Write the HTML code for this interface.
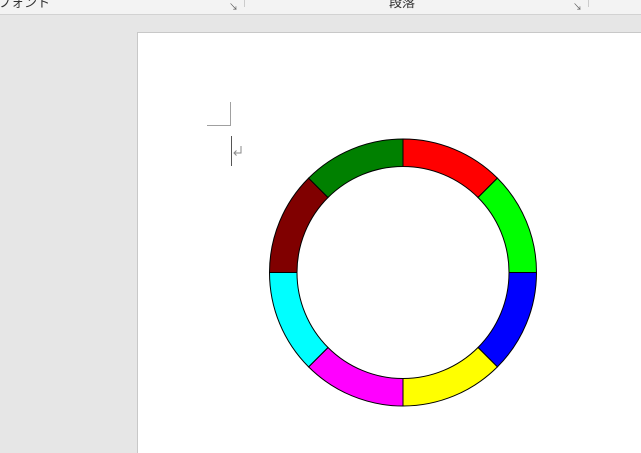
<!DOCTYPE html><html><head><meta charset="utf-8"><style>
body{margin:0;width:641px;height:442px;overflow:hidden;background:#e6e6e6;position:relative;font-family:"Liberation Sans","Noto Sans CJK JP",sans-serif}
.bar{position:absolute;left:0;top:0;width:641px;height:14px;background:#f3f3f3;border-bottom:1px solid #d2d2d2}
.t{position:absolute;top:-5px;font-size:13px;color:#333;line-height:16px}
.page{position:absolute;left:137px;top:32px;width:510px;height:420px;background:#fff;border-left:1px solid #c8c8c8;border-top:1px solid #c8c8c8}
</style></head><body>
<div class="bar">
<div class="t" style="left:-2px">フォント</div>
<div class="t" style="left:389px">段落</div>
<div style="position:absolute;left:229px;top:0;font-size:9px;color:#555">↘</div>
<div style="position:absolute;left:244px;top:0;width:1px;height:7px;background:#ccc"></div>
<div style="position:absolute;left:573px;top:0;font-size:9px;color:#555">↘</div>
<div style="position:absolute;left:588px;top:0;width:1px;height:7px;background:#ccc"></div>
</div>
<div class="page"></div>
<svg style="position:absolute;left:0;top:0" width="641" height="442">
<path d="M230.5 102V125.5H207" stroke="#a0a0a0" fill="none"/>
<path d="M231.5 136V166" stroke="#555" fill="none"/>
<path d="M241 146V153H234M236.5 150.5L234 153L236.5 155.5" stroke="#888" fill="none"/>
<g stroke="#000" stroke-width="1">
<path d="M403 139A133.5 133.5 0 0 1 497.4 178.1L478 197.5A106 106 0 0 0 403 166.5Z" fill="#f00"/>
<path d="M497.4 178.1A133.5 133.5 0 0 1 536.5 272.5L509 272.5A106 106 0 0 0 478 197.5Z" fill="#0f0"/>
<path d="M536.5 272.5A133.5 133.5 0 0 1 497.4 366.9L478 347.5A106 106 0 0 0 509 272.5Z" fill="#00f"/>
<path d="M497.4 366.9A133.5 133.5 0 0 1 403 406L403 378.5A106 106 0 0 0 478 347.5Z" fill="#ff0"/>
<path d="M403 406A133.5 133.5 0 0 1 308.6 366.9L328 347.5A106 106 0 0 0 403 378.5Z" fill="#f0f"/>
<path d="M308.6 366.9A133.5 133.5 0 0 1 269.5 272.5L297 272.5A106 106 0 0 0 328 347.5Z" fill="#0ff"/>
<path d="M269.5 272.5A133.5 133.5 0 0 1 308.6 178.1L328 197.5A106 106 0 0 0 297 272.5Z" fill="#800000"/>
<path d="M308.6 178.1A133.5 133.5 0 0 1 403 139L403 166.5A106 106 0 0 0 328 197.5Z" fill="#008000"/>
</g></svg>
</body></html>
